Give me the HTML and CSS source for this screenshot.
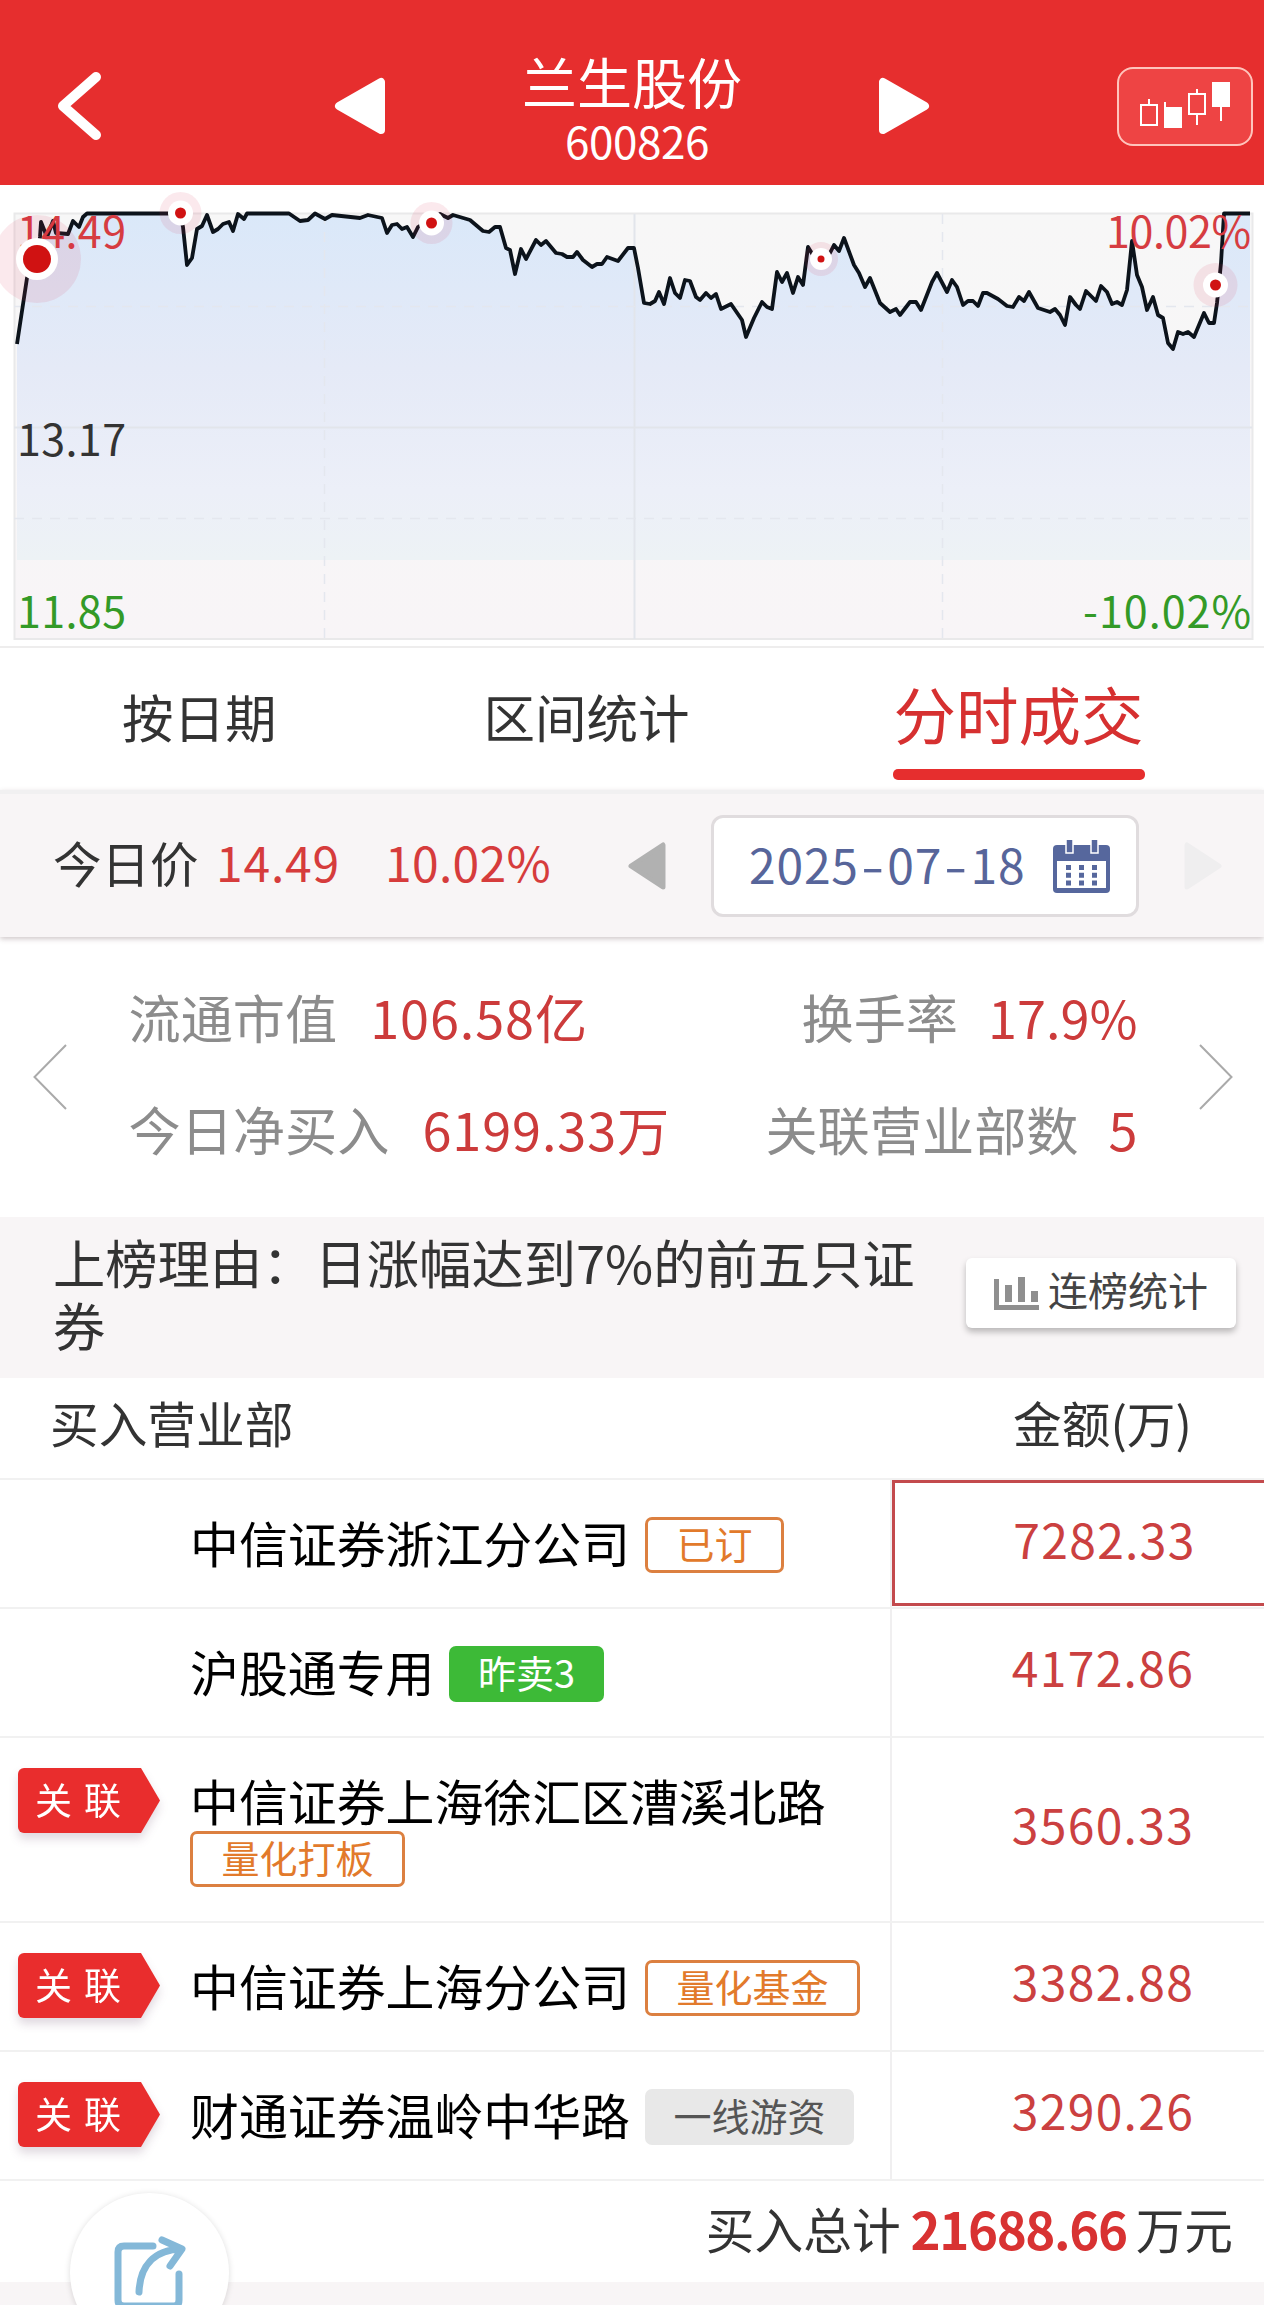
FILE: index.html
```html
<!DOCTYPE html>
<html lang="zh-CN">
<head>
  <meta charset="UTF-8">
  <meta name="viewport" content="width=device-width, initial-scale=1.0">
  <title>兰生股份 600826</title>
  <link rel="stylesheet" href="styles.css">
</head>
<body>
  <header class="header">
    <svg class="back" width="50" height="72" viewBox="0 0 50 72"><path d="M42 7 L9 36 L42 65"/></svg>
    <svg class="tri prev" width="52" height="58" viewBox="0 0 52 58"><path d="M5 29 L47 5 V53 Z"/></svg>
    <div class="stock">
      <h1>兰生股份</h1>
      <div class="code">600826</div>
    </div>
    <svg class="tri next" width="52" height="58" viewBox="0 0 52 58"><path d="M47 29 L5 5 V53 Z"/></svg>
    <button class="kline">
      <svg width="92" height="50" viewBox="0 0 92 50">
        <path class="line" d="M2 24h16v20h-16z M10 18v6 M26 21v8 M50 13h16v20h-16z M58 8v5 M58 33v11 M82 24v16"/>
        <path class="solid" d="M25 26h18v21h-18z M73 1h18v25h-18z"/>
      </svg>
    </button>
  </header>

  <section class="chart">
    <svg width="1264" height="461" viewBox="0 185 1264 461">
      <defs>
        <linearGradient id="fill" gradientUnits="userSpaceOnUse" x1="0" y1="213" x2="0" y2="560">
          <stop offset="0" stop-color="#dae8f9"/>
          <stop offset="0.45" stop-color="#e5eaf7"/>
          <stop offset="0.8" stop-color="#eceff8"/>
          <stop offset="1" stop-color="#edf2f5"/>
        </linearGradient>
        <linearGradient id="bg" x1="0" y1="0" x2="0" y2="1">
          <stop offset="0" stop-color="#f7f7f7"/>
          <stop offset="1" stop-color="#f8f5f7"/>
        </linearGradient>
      </defs>
      <rect class="frame" x="14.5" y="213.5" width="1238" height="425.5" fill="url(#bg)"/>
      <path id="area" fill="url(#fill)"/>
      <path class="grid" d="M14 427.5H1252 M634.5 214V639"/>
      <path class="grid dashed" d="M14 306.5H1252 M14 518.5H1252 M324.5 214V639 M942.5 214V639"/>
      <polyline id="line"/>
      <g class="labels">
        <text x="17" y="248" textLength="109" class="up">14.49</text>
        <text x="1106" y="248" textLength="145" class="up">10.02%</text>
        <text x="17" y="456" textLength="109">13.17</text>
        <text x="17" y="628" textLength="109" class="down">11.85</text>
        <text x="1083" y="628" textLength="168" class="down">-10.02%</text>
      </g>
      <g id="markers"></g>
    </svg>
  </section>

  <nav class="tabs">
    <a class="tab">按日期</a>
    <a class="tab">区间统计</a>
    <a class="tab active">分时成交</a>
  </nav>

  <section class="price-bar">
    <span class="price-label">今日价</span>
    <span class="price">14.49</span>
    <span class="percent">10.02%</span>
    <svg class="day-prev" width="38" height="48" viewBox="0 0 38 48"><path d="M3 24 L35 3 V45 Z"/></svg>
    <div class="date">
      <span>2025<i>-</i>07<i>-</i>18</span>
      <svg width="57" height="53" viewBox="0 0 57 53">
        <path class="body" d="M4 5h49q4 0 4 4v40q0 4-4 4H4q-4 0-4-4V9q0-4 4-4z"/>
        <path class="page" d="M4 21h49v27H4z"/>
        <path class="ring" d="M13 -1h7v14h-7z M38 -1h7v14h-7z"/>
        <path class="days" d="M15.500 25v21 M28.500 25v21 M41.500 25v21"/>
      </svg>
    </div>
    <svg class="day-next" width="38" height="48" viewBox="0 0 38 48"><path d="M35 24 L3 3 V45 Z"/></svg>
  </section>

  <section class="stats">
    <svg width="34" height="68" viewBox="0 0 34 68"><path d="M33 2 L1.500 34 L33 66"/></svg>
    <div class="stats-grid">
      <div class="stat">流通市值<b>106.58亿</b></div>
      <div class="stat right">换手率<b>17.9%</b></div>
      <div class="stat">今日净买入<b>6199.33万</b></div>
      <div class="stat right">关联营业部数<b>5</b></div>
    </div>
    <svg width="34" height="68" viewBox="0 0 34 68"><path d="M1 2 L32.500 34 L1 66"/></svg>
  </section>

  <section class="reason">
    <p>上榜理由：日涨幅达到7%的前五只证券</p>
    <button class="rank-btn">
      <svg width="45" height="33" viewBox="0 0 45 33"><path d="M0 2h5v26h40v5H0z M11 8h7v17h-7z M24 0h7v25h-7z M37 14h7v11h-7z"/></svg>
      <span>连榜统计</span>
    </button>
  </section>

  <section class="table">
    <div class="thead">
      <div>买入营业部</div>
      <div class="th-amount">金额(万)</div>
    </div>
    <div class="row">
      <div class="rel"></div>
      <div class="dept"><span class="name">中信证券浙江分公司</span><span class="badge orange">已订</span></div>
      <div class="amount selected">7282.33</div>
    </div>
    <div class="row">
      <div class="rel"></div>
      <div class="dept"><span class="name">沪股通专用</span><span class="badge green">昨卖3</span></div>
      <div class="amount">4172.86</div>
    </div>
    <div class="row">
      <div class="rel"><span class="tag">关联</span></div>
      <div class="dept"><span class="name">中信证券上海徐汇区漕溪北路</span><span class="badge orange">量化打板</span></div>
      <div class="amount">3560.33</div>
    </div>
    <div class="row">
      <div class="rel"><span class="tag">关联</span></div>
      <div class="dept"><span class="name">中信证券上海分公司</span><span class="badge orange">量化基金</span></div>
      <div class="amount">3382.88</div>
    </div>
    <div class="row">
      <div class="rel"><span class="tag">关联</span></div>
      <div class="dept"><span class="name">财通证券温岭中华路</span><span class="badge gray">一线游资</span></div>
      <div class="amount">3290.26</div>
    </div>
    <div class="total">买入总计<b>21688.66</b>万元</div>
  </section>

  <a class="share">
    <svg width="80" height="76" viewBox="0 0 80 76">
      <path d="M44 12 H15 q-6 0 -6 6 V66 q0 6 6 6 H65 q5 0 5 -6 V40"/>
      <path d="M30 58 C31 32 45 16 72 15 M53 6 L73 15 L61 32"/>
    </svg>
  </a>

  <script>
    // Intraday price line, [x, y] in chart pixels
    const points = [
      [17,344],[27,278],[37,259],[40,237],[41,222],[47,237],[53,221],[56,233],[68,234],[73,221],[79,227],[83,217],[87,213.5],
      [180,213.5],[183,227],[187,265],[192,258],[197,229],[202,226],[207,215],[213,232],[218,229],[223,224],[229,222],[233,231],
      [238,214],[244,219],[247,213.5],[289,213.5],[300,221],[308,220],[315,213.5],[325,219],[332,215],[360,218],[368,215],[382,218],
      [387,233],[392,225],[397,224],[402,229],[407,227],[413,237],[418,227],[431,219],[440,214],[448,218],[453,215],[470,220],
      [483,231],[489,232],[495,227],[500,227],[506,248],[510,250],[515,274],[521,249],[526,259],[536,240],[541,245],[546,241],
      [556,253],[562,254],[567,257],[573,257],[577,252],[583,260],[592,267],[597,264],[602,264],[607,257],[618,261],[628,248],
      [634,248],[638,268],[644,303],[650,304],[655,301],[659,292],[664,304],[670,278],[675,293],[680,298],[685,280],[690,281],
      [696,297],[700,300],[706,293],[711,298],[716,294],[721,309],[731,304],[742,320],[746,337],[754,318],[762,302],[767,307],
      [772,309],[777,272],[782,282],[787,273],[793,293],[798,277],[803,285],[808,247],[813,255],[821,259],[830,253],[834,245],
      [839,251],[844,238],[854,265],[859,273],[865,287],[870,278],[880,303],[890,312],[896,309],[900,315],[910,302],[916,302],
      [921,310],[932,282],[937,273],[947,292],[952,280],[957,287],[963,305],[968,301],[973,301],[978,306],[983,293],[987,293],
      [998,299],[1007,306],[1013,307],[1019,297],[1024,301],[1029,292],[1038,308],[1050,312],[1055,309],[1060,315],[1065,325],
      [1070,297],[1076,305],[1080,309],[1086,291],[1096,301],[1101,286],[1107,292],[1112,304],[1117,302],[1122,305],[1127,290],
      [1132,241],[1137,275],[1142,287],[1147,310],[1153,297],[1158,315],[1163,318],[1168,343],[1173,349],[1178,332],[1183,334],
      [1188,332],[1194,337],[1204,313],[1209,323],[1214,323],[1217,303],[1221,263],[1224,213.5],[1250,213.5]
    ];
    document.getElementById('line').setAttribute('points', points.join(' '));
    document.getElementById('area').setAttribute('d', 'M17 560 L' + points.join(' L') + ' V560 Z');

    // x, y, halo radius, ring radius, dot radius
    const markers = [
      [37, 259, 44, 21, 14],
      [180.5, 213, 21, 12.5, 5.5],
      [431.5, 223, 21, 12.5, 5.5],
      [821, 259, 17, 11, 3.5],
      [1215.5, 285, 22, 12.5, 5.5]
    ];
    document.getElementById('markers').innerHTML = markers.map(([x, y, halo, ring, dot]) =>
      `<circle class="halo" cx="${x}" cy="${y}" r="${halo}"/>` +
      `<circle class="ring" cx="${x}" cy="${y}" r="${ring}"/>` +
      `<circle class="dot" cx="${x}" cy="${y}" r="${dot}"/>`
    ).join('');
  </script>
</body>
</html>
```

FILE: styles.css
```css
* {
  box-sizing: border-box;
}
html, body {
  margin: 0;
  padding: 0;
}
body {
  position: relative;
  width: 1264px;
  height: 2305px;
  overflow: hidden;
  background: #f8f5f6;
  color: #333;
  font-family: "Noto Sans CJK SC", sans-serif;
}
svg {
  display: block;
  flex: none;
}
button {
  font-family: inherit;
  padding: 0;
  border: none;
}

/* header */
.header {
  height: 185px;
  padding: 27px 11px 0 54px;
  background: #e62e2e;
  color: #fff;
  display: flex;
  align-items: center;
}
.back path {
  fill: none;
  stroke: #fff;
  stroke-width: 10;
  stroke-linecap: round;
  stroke-linejoin: round;
}
.tri path {
  fill: #fff;
  stroke: #fff;
  stroke-width: 8;
  stroke-linejoin: round;
}
.prev {
  margin-left: 230px;
}
.stock {
  width: 492px;
  margin-top: 5px;
  text-align: center;
}
.stock h1 {
  margin: 0;
  font-size: 55px;
  font-weight: 400;
  line-height: 62px;
}
.code {
  padding-left: 10px;
  font-size: 44px;
  line-height: 58px;
  letter-spacing: -0.4px;
}
.kline {
  width: 136px;
  height: 79px;
  margin-left: auto;
  background: #ee4444;
  border: 2px solid #ffc4bc;
  border-radius: 16px;
  display: flex;
  align-items: center;
  justify-content: center;
}
.kline .line {
  fill: none;
  stroke: #fff;
  stroke-width: 2;
}
.kline .solid {
  fill: #fff;
}

/* chart */
.chart {
  height: 463px;
  background: #fff;
  border-bottom: 2px solid #eeeded;
}
.frame {
  stroke: #e9e9ea;
  stroke-width: 2;
}
.grid {
  fill: none;
  stroke: #e2e5eb;
  stroke-width: 2;
}
.dashed {
  stroke: #e4e7ee;
  stroke-width: 1.5;
  stroke-dasharray: 10 8;
}
#line {
  fill: none;
  stroke: #0c131b;
  stroke-width: 3.8;
  stroke-linejoin: round;
}
.labels {
  font-size: 43px;
  fill: #333;
}
.labels .up {
  fill: #d63c41;
}
.labels .down {
  fill: #339a27;
}
.halo {
  fill: rgba(215, 40, 80, 0.1);
}
.ring {
  fill: #fff;
}
.dot {
  fill: #d01212;
}

/* tabs */
.tabs {
  height: 142px;
  background: #fff;
  display: flex;
  padding-left: 122px;
}
.tab {
  height: 132px;
  padding-top: 30px;
  margin-right: 207px;
  font-size: 51.5px;
  line-height: 76px;
}
.tab:nth-child(2) {
  margin-right: 203px;
}
.tab.active {
  position: relative;
  width: 252px;
  margin-right: 0;
  padding-top: 27px;
  text-align: center;
  font-size: 62.5px;
  color: #d63030;
}
.tab.active::after {
  content: "";
  position: absolute;
  left: 0;
  right: 0;
  bottom: 0;
  height: 11px;
  border-radius: 5px;
  background: #e62e2e;
}

/* today's price and date */
.price-bar {
  height: 147px;
  border-top: 4px solid #f1f0f1;
  background: #f8f5f6;
  box-shadow: 0 2px 5px rgba(90, 60, 70, 0.28);
  position: relative;
  display: flex;
  align-items: center;
  padding: 1px 42px 0 53px;
}
.price-bar > span {
  line-height: 60px;
  margin-top: -8px;
  white-space: nowrap;
}
.price-label {
  width: 163px;
  font-size: 48.5px;
}
.price, .percent {
  padding-bottom: 2px;
  font-size: 48px;
  color: #d63c3c;
}
.price {
  width: 169px;
  letter-spacing: 0.8px;
}
.percent {
  width: 243px;
  letter-spacing: 0.3px;
}
.day-prev path {
  fill: #b1b1b1;
  stroke: #b1b1b1;
  stroke-width: 5;
  stroke-linejoin: round;
}
.day-next {
  margin-left: auto;
}
.day-next path {
  fill: #efeeef;
  stroke: #efeeef;
  stroke-width: 5;
  stroke-linejoin: round;
}
.date {
  width: 428px;
  height: 102px;
  margin-left: 45px;
  padding: 0 26px 0 35px;
  background: #fff;
  border: 3px solid #e0dcde;
  border-radius: 12px;
  display: flex;
  align-items: center;
  justify-content: space-between;
  color: #57659a;
  font-size: 48px;
  line-height: 60px;
}
.date span {
  margin-top: -6px;
  letter-spacing: 0.8px;
}
.date i {
  font-style: normal;
  display: inline-block;
  padding: 0 5.5px;
  transform: scaleX(1.4);
}
.date .body, .date .ring {
  fill: #56679d;
}
.date .page {
  fill: #fff;
}
.date .ring {
  stroke: #fff;
  stroke-width: 1.5;
}
.date .days {
  stroke: #56679d;
  stroke-width: 5;
  stroke-dasharray: 5 2.8;
}

/* stats */
.stats {
  height: 280px;
  background: #fff;
  display: flex;
  align-items: center;
  justify-content: space-between;
  padding: 0 31px 0 33px;
}
.stats path {
  fill: none;
  stroke: #aaa;
  stroke-width: 2;
}
.stats-grid {
  width: 1009px;
  margin-bottom: 11px;
  display: grid;
  grid-template-columns: auto auto;
  row-gap: 36px;
}
.stat {
  font-size: 52.2px;
  line-height: 76px;
  color: #8c8c8c;
  white-space: nowrap;
}
.stat b {
  font-weight: 400;
  color: #cc3b3b;
  margin-left: 33px;
  letter-spacing: 0.9px;
}
.stat.right {
  text-align: right;
}
.stat.right b {
  margin-left: 30px;
  letter-spacing: 0;
}

/* reason */
.reason {
  height: 161px;
  padding: 13px 28px 0 53px;
  display: flex;
  justify-content: space-between;
}
.reason p {
  width: 872px;
  margin: 0;
  font-size: 52.3px;
  line-height: 63px;
}
.rank-btn {
  width: 270px;
  height: 70px;
  margin-top: 28px;
  background: #fff;
  border-radius: 6px;
  box-shadow: 0 4px 6px rgba(0, 0, 0, 0.25);
  display: flex;
  align-items: center;
  justify-content: center;
  gap: 9px;
  color: #444;
  font-size: 40px;
  line-height: 60px;
}
.rank-btn span {
  padding-bottom: 8px;
}
.rank-btn svg {
  fill: #8f8f8f;
}

/* buyers */
.table {
  background: #fff;
}
.thead {
  display: flex;
  justify-content: space-between;
  height: 100px;
  padding: 12px 72px 0 50px;
  font-size: 48.7px;
  line-height: 64px;
}
.row {
  display: flex;
  min-height: 129px;
  border-top: 2px solid #f1f1f1;
}
.rel {
  width: 190px;
  padding: 30px 0 0 18px;
}
.tag {
  display: block;
  width: 142px;
  height: 65px;
  padding-left: 17px;
  background: #e92d2d;
  border-radius: 6px 0 0 6px;
  clip-path: polygon(0 0, 123px 0, 100% 50%, 123px 100%, 0 100%);
  color: #fff;
  font-size: 37px;
  line-height: 62px;
  letter-spacing: 12px;
}
.rel:not(:empty) {
  filter: drop-shadow(0 6px 5px rgba(60, 20, 60, 0.16));
}
.dept {
  width: 702px;
  padding: 34px 0;
  border-right: 2px solid #f0eff0;
  display: flex;
  flex-wrap: wrap;
  align-content: flex-start;
  color: #000;
}
.name {
  margin-right: 15px;
  font-size: 48.9px;
  line-height: 56px;
}
.badge {
  height: 56px;
  margin-top: 3px;
  padding: 0 28.5px;
  border-radius: 7px;
  font-size: 38px;
  line-height: 46px;
}
.orange {
  border: 3px solid #dc8040;
  color: #e27a2b;
}
.green {
  background: #3dba37;
  color: #fff;
  line-height: 52px;
}
.gray {
  background: #e8e8e8;
  color: #555;
  line-height: 52px;
}
.amount {
  flex: 1;
  display: flex;
  align-items: center;
  justify-content: center;
  padding: 0 0 13px 50px;
  color: #cb4040;
  font-size: 48px;
  letter-spacing: 1.3px;
}
.selected {
  height: 126px;
  margin-right: -3px;
  padding-bottom: 11px;
  border: 3px solid #c34a4d;
}
.total {
  height: 103px;
  padding: 12px 31px 0 0;
  border-top: 2px solid #f1f1f1;
  display: flex;
  justify-content: flex-end;
  font-size: 48.7px;
  line-height: 70px;
}
.total b {
  margin: 0 9px 0 10px;
  color: #d83232;
  font-size: 51px;
  letter-spacing: -1.4px;
}

/* floating share button */
.share {
  position: absolute;
  left: 70px;
  top: 2193px;
  width: 159px;
  height: 159px;
  padding: 41px 0 0 39px;
  border-radius: 50%;
  background: #fff;
  box-shadow: 0 1px 6px rgba(0, 0, 0, 0.14);
}
.share path {
  fill: none;
  stroke: #84b8d8;
  stroke-width: 7;
  stroke-linecap: round;
  stroke-linejoin: round;
}
```
